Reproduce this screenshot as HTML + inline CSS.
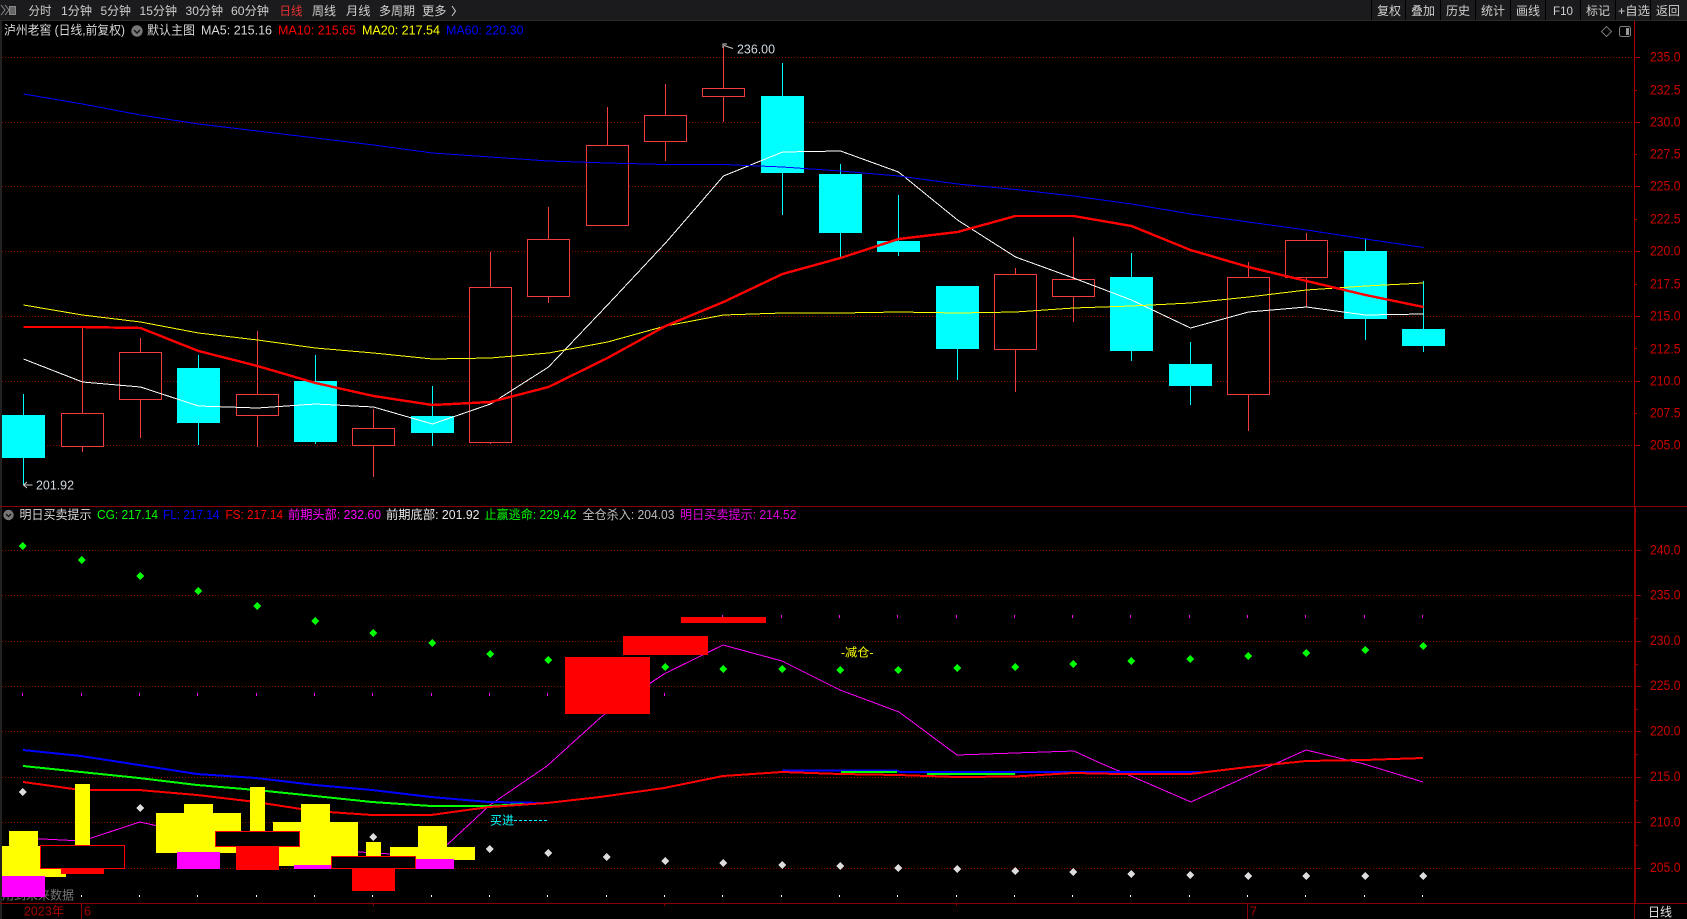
<!DOCTYPE html>
<html lang="zh">
<head>
<meta charset="utf-8">
<title>泸州老窖 日线</title>
<style>
html,body{margin:0;padding:0;background:#000;width:1687px;height:919px;overflow:hidden}
svg{display:block}
text{font-family:"Liberation Sans","Noto Sans CJK SC",sans-serif;font-size:12.5px}
.c{shape-rendering:crispEdges}
.g{stroke:#8f0000;stroke-width:1;stroke-dasharray:1 2;fill:none}
.ax text{fill:#cc0000;font-size:13.5px}
.nav text{fill:#cfcfcf;font-size:12px}
</style>
</head>
<body>
<svg xmlns="http://www.w3.org/2000/svg" width="1687" height="919" viewBox="0 0 1687 919">
<rect width="1687" height="919" fill="#000"/>
<rect x="0" y="21" width="2" height="898" fill="#222"/>

<!-- top bar -->
<g class="c">
<rect width="1687" height="20" fill="#1b1b1d"/>
<rect y="20" width="1687" height="1" fill="#2a2a2a"/>
<path d="M1371.5 0V20M1405.5 0V20M1440.5 0V20M1475.5 0V20M1510.5 0V20M1545.5 0V20M1580.5 0V20M1615.5 0V20M1650.5 0V20" stroke="#000" fill="none"/>
</g>
<path d="M1 5l4 5-4 5M5 5l4 5-4 5" stroke="#8a8a8a" fill="none"/>
<rect x="9.500" y="6.500" width="6" height="8" fill="#666" stroke="#888"/>
<g class="nav">
<text x="28.500" y="15" textLength="23" lengthAdjust="spacingAndGlyphs">分时</text>
<text x="61" y="15" textLength="31" lengthAdjust="spacingAndGlyphs">1分钟</text>
<text x="100.500" y="15" textLength="30.500" lengthAdjust="spacingAndGlyphs">5分钟</text>
<text x="139.500" y="15" textLength="37.500" lengthAdjust="spacingAndGlyphs">15分钟</text>
<text x="185.500" y="15" textLength="37.500" lengthAdjust="spacingAndGlyphs">30分钟</text>
<text x="231" y="15" textLength="38" lengthAdjust="spacingAndGlyphs">60分钟</text>
<text x="279.500" y="15" textLength="23" lengthAdjust="spacingAndGlyphs" style="fill:#e83232">日线</text>
<text x="312" y="15" textLength="24" lengthAdjust="spacingAndGlyphs">周线</text>
<text x="346" y="15" textLength="24.500" lengthAdjust="spacingAndGlyphs">月线</text>
<text x="379" y="15" textLength="36" lengthAdjust="spacingAndGlyphs">多周期</text>
<text x="422" y="15" textLength="24.500" lengthAdjust="spacingAndGlyphs">更多</text>
<path d="M452 6l3.500 5-3.500 5" stroke="#cfcfcf" fill="none"/>
<text x="1377" y="15" textLength="24" lengthAdjust="spacingAndGlyphs">复权</text>
<text x="1411" y="15" textLength="24" lengthAdjust="spacingAndGlyphs">叠加</text>
<text x="1446" y="15" textLength="24" lengthAdjust="spacingAndGlyphs">历史</text>
<text x="1481" y="15" textLength="24" lengthAdjust="spacingAndGlyphs">统计</text>
<text x="1516" y="15" textLength="24" lengthAdjust="spacingAndGlyphs">画线</text>
<text x="1553" y="15" textLength="20" lengthAdjust="spacingAndGlyphs">F10</text>
<text x="1586" y="15" textLength="24" lengthAdjust="spacingAndGlyphs">标记</text>
<text x="1618" y="15" textLength="32" lengthAdjust="spacingAndGlyphs">+自选</text>
<text x="1656" y="15" textLength="24" lengthAdjust="spacingAndGlyphs">返回</text>
</g>

<!-- main title -->
<text x="4" y="34.500" fill="#d8d8d8" textLength="121" lengthAdjust="spacingAndGlyphs">泸州老窖 (日线,前复权)</text>
<circle cx="137" cy="31" r="5.700" fill="#777"/>
<path d="M134 30l3 3 3-3" stroke="#111" stroke-width="1.400" fill="none"/>
<text x="147" y="34.500" fill="#d8d8d8" textLength="48" lengthAdjust="spacingAndGlyphs">默认主图</text>
<text x="201" y="34.500" fill="#d8d8d8" textLength="71" lengthAdjust="spacingAndGlyphs">MA5: 215.16</text>
<text x="278" y="34.500" fill="#f00" textLength="78" lengthAdjust="spacingAndGlyphs">MA10: 215.65</text>
<text x="362" y="34.500" fill="#ff0" textLength="78" lengthAdjust="spacingAndGlyphs">MA20: 217.54</text>
<text x="446" y="34.500" fill="#00f" textLength="77.500" lengthAdjust="spacingAndGlyphs">MA60: 220.30</text>
<path d="M1606.500 26.500l5 5-5 5-5-5z" stroke="#777" fill="none"/>
<rect x="1619.500" y="26.500" width="11" height="10" rx="2" fill="none" stroke="#808080"/>
<rect x="1626" y="28" width="3" height="7" fill="#999"/>

<!-- main grid -->
<g class="c">
<path class="g" d="M2 57.500H1634M2 122.500H1634M2 186.500H1634M2 251.500H1634M2 316.500H1634M2 381.500H1634M2 445.500H1634"/>
<rect x="1634" y="21" width="1" height="485" fill="#a80000"/>
<path d="M1634 57.500h6M1634 122.500h6M1634 186.500h6M1634 251.500h6M1634 316.500h6M1634 381.500h6M1634 445.500h6M1634 90.500h3M1634 154.500h3M1634 219.500h3M1634 284.500h3M1634 348.500h3M1634 413.500h3" stroke="#a80000" fill="none"/>
<rect x="0" y="506" width="1687" height="1" fill="#8b0000"/>
</g>
<g class="ax">
<text x="1650" y="61.500" textLength="30.500" lengthAdjust="spacingAndGlyphs">235.0</text>
<text x="1650" y="94.500" textLength="30.500" lengthAdjust="spacingAndGlyphs">232.5</text>
<text x="1650" y="126.500" textLength="30.500" lengthAdjust="spacingAndGlyphs">230.0</text>
<text x="1650" y="158.500" textLength="30.500" lengthAdjust="spacingAndGlyphs">227.5</text>
<text x="1650" y="190.500" textLength="30.500" lengthAdjust="spacingAndGlyphs">225.0</text>
<text x="1650" y="223.500" textLength="30.500" lengthAdjust="spacingAndGlyphs">222.5</text>
<text x="1650" y="255.500" textLength="30.500" lengthAdjust="spacingAndGlyphs">220.0</text>
<text x="1650" y="288.500" textLength="30.500" lengthAdjust="spacingAndGlyphs">217.5</text>
<text x="1650" y="320.500" textLength="30.500" lengthAdjust="spacingAndGlyphs">215.0</text>
<text x="1650" y="353.500" textLength="30.500" lengthAdjust="spacingAndGlyphs">212.5</text>
<text x="1650" y="385.500" textLength="30.500" lengthAdjust="spacingAndGlyphs">210.0</text>
<text x="1650" y="417.500" textLength="30.500" lengthAdjust="spacingAndGlyphs">207.5</text>
<text x="1650" y="449.500" textLength="30.500" lengthAdjust="spacingAndGlyphs">205.0</text>
</g>

<!-- candles -->
<g class="c">
<path stroke="#0ff" fill="none" d="M23.500 394V485M198.500 355V445M315.500 355V444M432.500 386V446M782.500 63V215M840.500 164V258M898.500 195V256M957.500 286V380M1131.500 253V361M1190.500 342V405M1365.500 239V340M1423.500 281V352"/>
<path fill="#0ff" d="M2 415h43v43H2zM177 368h43v55H177zM294 381h43v61H294zM411 416h43v17H411zM761 96h43v77H761zM819 174h43v59H819zM877 241h43v11H877zM936 286h43v63H936zM1110 277h43v74H1110zM1169 364h43v22H1169zM1344 251h43v68H1344zM1402 329h43v17H1402z"/>
<path stroke="#f33c3c" fill="none" d="M82.500 327V452M140.500 338V438M257.500 331V447M373.500 409V477M490.500 252V444M548.500 207V303M607.500 107V146M665.500 84V161M723.500 46V122M1015.500 268V392M1073.500 237V322M1248.500 262V431M1306.500 233V307"/>
<path stroke="#f33c3c" fill="#000" d="M61.500 413.500h42v33h-42zM119.500 352.500h42v47h-42zM236.500 394.500h42v21h-42zM352.500 428.500h42v17h-42zM469.500 287.500h42v155h-42zM527.500 239.500h42v57h-42zM586.500 145.500h42v80h-42zM644.500 115.500h42v26h-42zM702.500 88.500h42v8h-42zM994.500 274.500h42v75h-42zM1052.500 279.500h42v17h-42zM1227.500 277.500h42v117h-42zM1285.500 240.500h42v37h-42z"/>
<!-- moving averages -->
<polyline fill="none" stroke="#fff" points="23.500,359 82.500,382 140.500,387 198.500,406 257.500,408 315.500,404 373.500,407 432.500,424 490.500,404 548.500,367 607.500,305 665.500,243 723.500,176 782.500,152 840.500,151 898.500,172 957.500,220 1015.500,257 1073.500,278 1131.500,300 1190.500,328 1248.500,312 1306.500,307 1365.500,315 1423.500,314"/>
<polyline fill="none" stroke="#ff0" points="23.500,305 82.500,315 140.500,322 198.500,333 257.500,340 315.500,348 373.500,353 432.500,359 490.500,358 548.500,353 607.500,342 665.500,326 723.500,315 782.500,313 840.500,313 898.500,312 957.500,313 1015.500,312 1073.500,308 1131.500,306 1190.500,303 1248.500,297 1306.500,290 1365.500,286 1423.500,283"/>
<polyline fill="none" stroke="#00f" points="23.500,94 82.500,104 140.500,115 198.500,124 257.500,131 315.500,138 373.500,145 432.500,153 490.500,157 548.500,161 607.500,163 665.500,164.500 723.500,164.500 782.500,167 840.500,171 898.500,176 957.500,184 1015.500,189.500 1073.500,196 1131.500,204 1190.500,214 1248.500,222 1306.500,230 1365.500,239 1423.500,247.500"/>
<polyline fill="none" stroke="#f00" stroke-width="2.400" points="23.500,327 82.500,327 140.500,328 198.500,351 257.500,366 315.500,383 373.500,396 432.500,405 490.500,402 548.500,387 607.500,358 665.500,326 723.500,302 782.500,274 840.500,258 898.500,239 957.500,232 1015.500,216 1073.500,216 1131.500,226 1190.500,250 1248.500,267 1306.500,281 1365.500,295 1423.500,307"/>
</g>
<path d="M23.500 485h9M27 482l-3.500 3 3.500 3" stroke="#ccc" fill="none"/>
<text x="36" y="489.500" fill="#cfd8e0" textLength="38" lengthAdjust="spacingAndGlyphs">201.92</text>
<path d="M733 48.500l-9-3M727 44h-4v4" stroke="#ccc" fill="none"/>
<text x="737" y="53.500" fill="#cfd8e0" textLength="38" lengthAdjust="spacingAndGlyphs">236.00</text>

<!-- sub title -->
<circle cx="8.500" cy="515" r="5.200" fill="#777"/>
<path d="M6 514l2.500 2.500L11 514" stroke="#111" stroke-width="1.300" fill="none"/>
<text x="19.500" y="519" fill="#d8d8d8" textLength="72" lengthAdjust="spacingAndGlyphs">明日买卖提示</text>
<text x="97" y="519" fill="#0f0" textLength="61" lengthAdjust="spacingAndGlyphs">CG: 217.14</text>
<text x="163" y="519" fill="#00f" textLength="56.500" lengthAdjust="spacingAndGlyphs">FL: 217.14</text>
<text x="225.500" y="519" fill="#f00" textLength="57.500" lengthAdjust="spacingAndGlyphs">FS: 217.14</text>
<text x="288" y="519" fill="#f0f" textLength="93" lengthAdjust="spacingAndGlyphs">前期头部: 232.60</text>
<text x="386" y="519" fill="#e8e8e8" textLength="93.500" lengthAdjust="spacingAndGlyphs">前期底部: 201.92</text>
<text x="484.500" y="519" fill="#0f0" textLength="92" lengthAdjust="spacingAndGlyphs">止赢逃命: 229.42</text>
<text x="582.500" y="519" fill="#bdbdbd" textLength="92" lengthAdjust="spacingAndGlyphs">全仓杀入: 204.03</text>
<text x="680" y="519" fill="#e000e0" textLength="116.500" lengthAdjust="spacingAndGlyphs">明日买卖提示: 214.52</text>

<!-- sub grid -->
<g class="c">
<path class="g" d="M2 550.500H1634M2 595.500H1634M2 641.500H1634M2 686.500H1634M2 731.500H1634M2 777.500H1634M2 822.500H1634M2 868.500H1634"/>
<rect x="1634" y="507" width="2" height="396" fill="#8b0000"/>
<path d="M1636 550.500h5M1636 595.500h5M1636 641.500h5M1636 686.500h5M1636 731.500h5M1636 777.500h5M1636 822.500h5M1636 868.500h5M1636 618.500h2M1636 664.500h2M1636 709.500h2M1636 754.500h2M1636 800.500h2M1636 845.500h2" stroke="#8b0000" fill="none"/>
<rect x="0" y="903" width="1687" height="1" fill="#8b0000"/>
<path d="M81.500 903V919M1247.500 903V919M1634.500 903V919M373.500 903v3M664.500 903v3M956.500 903v3" stroke="#8b0000" fill="none"/>
</g>
<g class="ax">
<text x="1650" y="554.500" textLength="30.500" lengthAdjust="spacingAndGlyphs">240.0</text>
<text x="1650" y="599.500" textLength="30.500" lengthAdjust="spacingAndGlyphs">235.0</text>
<text x="1650" y="645" textLength="30.500" lengthAdjust="spacingAndGlyphs">230.0</text>
<text x="1650" y="690" textLength="30.500" lengthAdjust="spacingAndGlyphs">225.0</text>
<text x="1650" y="735.500" textLength="30.500" lengthAdjust="spacingAndGlyphs">220.0</text>
<text x="1650" y="781" textLength="30.500" lengthAdjust="spacingAndGlyphs">215.0</text>
<text x="1650" y="826.500" textLength="30.500" lengthAdjust="spacingAndGlyphs">210.0</text>
<text x="1650" y="872" textLength="30.500" lengthAdjust="spacingAndGlyphs">205.0</text>
</g>
<text x="24" y="915.500" fill="#a80000" textLength="40" lengthAdjust="spacingAndGlyphs">2023年</text>
<text x="84" y="915.500" fill="#a80000">6</text>
<text x="1250" y="915.500" fill="#a80000">7</text>
<text x="1648" y="916.500" fill="#e0e0e0" textLength="24" lengthAdjust="spacingAndGlyphs">日线</text>
<text x="2" y="899.500" fill="#777" textLength="72" lengthAdjust="spacingAndGlyphs">用到未来数据</text>

<!-- sub ticks -->
<g class="c">
<path stroke="#f0f" fill="none" d="M22.500 693v3M81.500 693v3M139.500 693v3M197.500 693v3M256.500 693v3M314.500 693v3M372.500 693v3M431.500 693v3M489.500 693v3M547.500 693v3M664.500 693v3M722.500 615v3M781.500 615v3M839.500 615v3M897.500 615v3M956.500 615v3M1014.500 615v3M1072.500 615v3M1130.500 615v3M1189.500 615v3M1247.500 615v3M1305.500 615v3M1364.500 615v3M1422.500 615v3"/>
<path stroke="#fff" fill="none" d="M81.500 895v2M139.500 895v2M197.500 895v2M256.500 895v2M314.500 895v2M372.500 895v2M431.500 895v2M489.500 895v2M547.500 895v2M606.500 895v2M664.500 895v2M722.500 895v2M781.500 895v2M839.500 895v2M897.500 895v2M956.500 895v2M1014.500 895v2M1072.500 895v2M1130.500 895v2M1189.500 895v2M1247.500 895v2M1305.500 895v2M1364.500 895v2M1422.500 895v2"/>

<!-- sub lines -->
<polyline fill="none" stroke="#f0f" points="23,838 82,841 140,822 198,835 257,850 315,852 360,852 390,854 448,844 490,805 547,766 600,718 605,714 649,684 664,674 723,645 782,661 840,690 899,712 957,755 1015,753 1074,751 1100,763 1131,776 1191,802 1248,776 1306,750 1364,764 1423,782"/>
<polyline fill="none" stroke="#00f" stroke-width="2" points="23,750 81,756 139,765 197,774 256,778 315,785 372,790 431,797 489,802 547,803"/>
<polyline fill="none" stroke="#00f" stroke-width="2" points="782,770.500 897,770.500 900,772 1201,772"/>
<polyline fill="none" stroke="#0f0" stroke-width="2" points="23,766 81,772 139,778 197,785 256,790 315,796 372,802 431,806 489,806 524,804"/>
<path stroke="#0f0" stroke-width="2" fill="none" d="M841 772H897M927 774H1015"/>
<polyline fill="none" stroke="#f00" stroke-width="2" points="23,782 81,790 139,790 197,795 256,802 314,811 372,815 431,815 489,807 547,803 600,797 664,788 723,776 782,772 840,774 898,775 957,777 1015,776.500 1073,773 1120,774 1190,774 1248,767 1306,761 1364,760 1423,758"/>

<!-- dots -->
<path fill="#dcdcdc" d="M22.500 788l4 4-4 4-4-4zM140 804l4 4-4 4-4-4zM373 833l4 4-4 4-4-4zM489.500 845l4 4-4 4-4-4zM548 849l4 4-4 4-4-4zM606.500 853l4 4-4 4-4-4zM665 857l4 4-4 4-4-4zM723 859l4 4-4 4-4-4zM782 861l4 4-4 4-4-4zM840 862l4 4-4 4-4-4zM898 864l4 4-4 4-4-4zM957 865l4 4-4 4-4-4zM1015 867l4 4-4 4-4-4zM1073 868l4 4-4 4-4-4zM1131 870l4 4-4 4-4-4zM1190 871l4 4-4 4-4-4zM1248 872l4 4-4 4-4-4zM1306 872l4 4-4 4-4-4zM1365 872l4 4-4 4-4-4zM1423 872l4 4-4 4-4-4z"/>
<path fill="#0f0" d="M22.500 542l4 4-4 4-4-4zM81.500 556l4 4-4 4-4-4zM140 572l4 4-4 4-4-4zM198 587l4 4-4 4-4-4zM257 602l4 4-4 4-4-4zM315 617l4 4-4 4-4-4zM373 629l4 4-4 4-4-4zM432 639l4 4-4 4-4-4zM490 650l4 4-4 4-4-4zM548 656l4 4-4 4-4-4zM665 663l4 4-4 4-4-4zM723 665l4 4-4 4-4-4zM782 665l4 4-4 4-4-4zM840 666l4 4-4 4-4-4zM898 666l4 4-4 4-4-4zM957 664l4 4-4 4-4-4zM1015 663l4 4-4 4-4-4zM1073 660l4 4-4 4-4-4zM1131 657l4 4-4 4-4-4zM1190 655l4 4-4 4-4-4zM1248 652l4 4-4 4-4-4zM1306 649l4 4-4 4-4-4zM1365 646l4 4-4 4-4-4zM1423 642l4 4-4 4-4-4z"/>

<!-- blocks -->
<path fill="#ff0" d="M2 846H66V877H2zM9 831H38V846H9zM75 784H90V845H75zM156 813H241V853H156zM184 804H213V813H184zM250 787H265V831H250zM273 822H358V866H273zM301 804H330V822H301zM366 842H381V856H366zM390 847H475V860H390zM418 826H447V847H418z"/>
<path fill="#f0f" d="M2 876H45V897H2zM177 852H220V869H177zM294 865H331V869H294zM416 859H454V869H416z"/>
<path fill="#f00" d="M61 869H104V874H61zM236 847H279V870H236zM352 869H395V891H352zM565 657H650V714H565zM623 636H708V655H623zM681 617H766V623H681z"/>
<path fill="#000" stroke="#f00" d="M40.500 845.500H124.500V868.500H40.500zM215.500 831.500H299.500V846.500H215.500zM331.500 856.500H415.500V868.500H331.500z"/>
</g>
<text x="490" y="824.500" fill="#0ff" textLength="24" lengthAdjust="spacingAndGlyphs" style="font-size:12px">买进</text>
<path d="M514 820.500H548" stroke="#0ff" stroke-dasharray="3 2" fill="none" class="c"/>
<text x="841" y="656.500" fill="#ff0" textLength="32.500" lengthAdjust="spacingAndGlyphs" style="font-size:12px">-减仓-</text>
</svg>
</body>
</html>
